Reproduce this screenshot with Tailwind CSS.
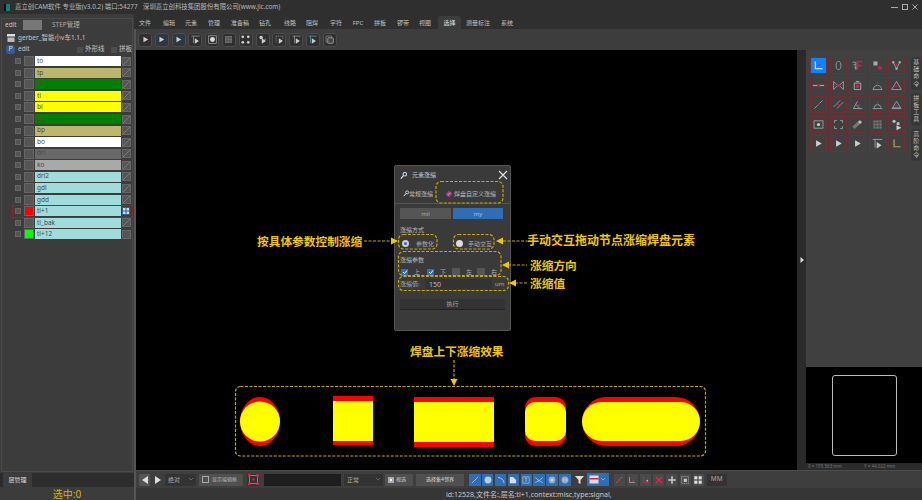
<!DOCTYPE html>
<html lang="zh">
<head>
    <meta charset="UTF-8">
    <title>嘉立创CAM软件</title>
    <script src="https://cdn.jsdelivr.net/npm/@tailwindcss/browser@4"></script>
</head>
<body class="w-[922px] h-[500px] overflow-hidden bg-[#2f2f2f] text-[#c4c4c4] font-['Noto_Sans','Noto_Sans_CJK_SC',sans-serif] text-[6px] leading-none">

    <!-- Title bar -->
    <div class="h-[14px] flex items-center bg-[#2f2f2f] text-[6.4px] text-[#b8b8b8] whitespace-nowrap">
        <div class="ml-[4px] w-[6px] h-[7px] bg-[#0f7f6f] border-l-[2px] border-[#111]"></div>
        <span class="ml-[5px] w-[128px]">嘉立创CAM软件 专业版(v3.0.2) 端口:54277</span>
        <span>深圳嘉立创科技集团股份有限公司(www.jlc.com)</span>
        <div class="ml-auto mr-[4px] flex items-center gap-[4px]">
            <div class="w-[7px] h-[1px] bg-[#aaa]"></div>
            <div class="w-[6px] h-[6px] border border-[#aaa]"></div>
            <svg class="w-[6px] h-[6px]" viewBox="0 0 6 6"><path d="M0.5 0.5L5.5 5.5M5.5 0.5L0.5 5.5" stroke="#aaa"/></svg>
        </div>
    </div>

    <div class="flex h-[486px]">
        <!-- Left panel -->
        <div class="w-[136px] shrink-0 flex flex-col bg-[#3c3c3c] border-r-[2px] border-[#555]">
            <div class="flex-1 mx-[1px] mt-[4px] flex flex-col border border-[#4a4a4a]">
                <div class="h-[12px] flex items-center text-[6.5px]">
                    <span class="ml-[3px] w-[18px]">edit</span>
                    <div class="w-[19px] h-[10px] bg-[#777]"></div>
                    <span class="ml-[10px] text-[#aaa]">STEP管理</span>
                </div>
                <div class="h-[14px] flex items-center">
                    <svg class="ml-[5px] w-[8px] h-[8px]" viewBox="0 0 8 8"><path d="M0 0H8V2.5H0Z" fill="#ddd"/><path d="M0.5 3.5H7.5V8H0.5Z" fill="#bbb"/></svg>
                    <span class="ml-[3px] text-[6.5px]">gerber_智能小v车1.1.1</span>
                </div>
                <div class="h-[9px] flex items-center text-[6.5px]">
                    <div class="ml-[4px] w-[9px] h-[9px] rounded-[3px] bg-[#2f5f96] text-[#dde] text-center text-[7px]">P</div>
                    <span class="ml-[3px] w-[59px]">edit</span>
                    <div class="w-[6px] h-[6px] bg-[#4d4d4d]"></div>
                    <span class="ml-[2px] w-[26px]">外形线</span>
                    <div class="w-[6px] h-[6px] bg-[#4d4d4d]"></div>
                    <span class="ml-[2px]">拼板</span>
                </div>
                <div id="layers" class="mt-[1.5px]"></div>
            </div>
            <div class="h-[14px] bg-[#2c2c2c] mt-[1px]">
                <div class="ml-[3px] w-[29px] h-[14px] bg-[#3c3c3c] flex items-center justify-center text-[#ddd]">层管理</div>
            </div>
            <div class="h-[13px] flex items-center justify-center text-[10px] text-[#d8b400]">选中:0</div>
        </div>

        <!-- Right side -->
        <div class="flex-1 flex flex-col min-w-0">
            <div id="tabs" class="h-[15px] -ml-[2px] flex items-end bg-[#2f2f2f] text-[#c0c0c0]"></div>
            <div id="tools" class="h-[21px] flex items-center pl-[2px] gap-[2.8px] bg-[#3d3d3d]"></div>

            <div class="h-[420px] flex">
                <!-- Canvas -->
                <div class="relative w-[661px] bg-black">
                    <!-- Dialog -->
                    <div class="absolute left-[258px] top-[115px] w-[117px] h-[166px] flex flex-col bg-[#3a3a3a] border border-[#555] rounded-[2px]">
                        <div class="h-[18px] flex items-center pl-[5px] text-[#ccc]">
                            <svg class="w-[7px] h-[7px]" viewBox="0 0 8 8"><circle cx="5.5" cy="2.5" r="2" fill="none" stroke="#bcd" stroke-width="1.3"/><path d="M4 4L1 7.5" stroke="#eef" stroke-width="1.3"/></svg>
                            <span class="ml-[5px]">元素涨缩</span>
                            <svg class="ml-auto mr-[2px] w-[10px] h-[10px]" viewBox="0 0 10 10"><path d="M1 1L9 9M9 1L1 9" stroke="#ddd" stroke-width="1.2"/></svg>
                        </div>
                        <div class="h-[19px] flex items-center pl-[8px] text-[#bbb]">
                            <svg class="w-[6px] h-[7px]" viewBox="0 0 8 8"><circle cx="5.5" cy="2.5" r="2" fill="none" stroke="#bcd" stroke-width="1.3"/><path d="M4 4L1 7.5" stroke="#eef" stroke-width="1.3"/></svg>
                            <span class="w-[34px]">常规涨缩</span>
                            <svg class="ml-[2px] w-[8px] h-[8px]" viewBox="0 0 8 8"><path d="M4 0.5L7.5 4L4 7.5L0.5 4Z" fill="#9a2fb0"/><path d="M2.5 5.5L5.5 2.5" stroke="#f07020" stroke-width="1.6"/></svg>
                            <span class="ml-[1px]">焊盘自定义涨缩</span>
                        </div>
                        <div class="flex-1 flex flex-col px-[5px] pt-[4px] border-t border-[#555]">
                            <div class="h-[11px] flex gap-[2px]">
                                <div class="w-[51px] bg-[#555] flex items-center justify-center text-[#aaa]">mil</div>
                                <div class="w-[50px] bg-[#2f6db5] flex items-center justify-center text-[#9fc4ea]">my</div>
                            </div>
                            <div class="h-[10px] mt-[6px] flex items-center text-[#bbb]">涨缩方式</div>
                            <div class="h-[15px] mt-[1px] flex items-center text-[#aaa]">
                                <div class="ml-[2px] w-[7px] h-[7px] rounded-full bg-[#2f6db5] border-[2px] border-[#ccd]"></div>
                                <span class="ml-[7px] w-[40px]">参数化</span>
                                <div class="w-[7px] h-[7px] rounded-full bg-[#ddd]"></div>
                                <span class="ml-[5px]">手动交互</span>
                            </div>
                            <div class="h-[10px] mt-[4px] flex items-center text-[#bbb]">涨缩参数</div>
                            <div class="h-[12px] mt-[1px] flex items-center text-[#aaa]">
                                <div class="ml-[1px] w-[7px] h-[7px] bg-[#2f6db5] flex items-center justify-center"><svg class="w-[6px] h-[6px]" viewBox="0 0 6 6"><path d="M1 3L2.5 4.5L5 1.5" fill="none" stroke="#fff" stroke-width="1"/></svg></div>
                                <span class="ml-[6px] w-[13px]">上</span>
                                <div class="w-[7px] h-[7px] bg-[#2f6db5] flex items-center justify-center"><svg class="w-[6px] h-[6px]" viewBox="0 0 6 6"><path d="M1 3L2.5 4.5L5 1.5" fill="none" stroke="#fff" stroke-width="1"/></svg></div>
                                <span class="ml-[6px] w-[12px]">下</span>
                                <div class="w-[8px] h-[8px] bg-[#555]"></div>
                                <span class="ml-[6px] w-[11px]">左</span>
                                <div class="w-[8px] h-[8px] bg-[#555]"></div>
                                <span class="ml-[6px]">右</span>
                            </div>
                            <div class="h-[12px] flex items-center text-[#aaa]">
                                <span class="w-[25px]">涨缩值:</span>
                                <div class="w-[67px] h-[10px] bg-[#333] flex items-center pl-[4px] text-[7px] text-[#bbb]">150</div>
                                <span class="ml-[3px]">um</span>
                            </div>
                            <div class="h-[11px] mt-[9px] w-[105px] bg-[#333] border-b border-[#222] flex items-center justify-center text-[#aaa]">执行</div>
                        </div>
                    </div>

                    <!-- Annotation lines and pad drawing -->
                    <svg class="absolute inset-0 w-[661px] h-[420px]" viewBox="136 50 661 420" fill="none">
                        <g stroke="#c8a800" stroke-width="1.2" stroke-dasharray="3 1.5">
                            <rect x="436" y="181.5" width="67" height="21.5" rx="5"/>
                            <rect x="398.5" y="234.5" width="38.5" height="14.5" rx="5"/>
                            <rect x="453.5" y="234.5" width="40.5" height="14.5" rx="5"/>
                            <rect x="398.5" y="251.5" width="102.5" height="24" rx="5"/>
                            <rect x="398.5" y="276.5" width="110" height="14" rx="5"/>
                            <rect x="235.5" y="386.5" width="470" height="69.5" rx="5"/>
                            <path d="M364 241H392"/>
                            <path d="M503 241H527"/>
                            <path d="M508 265H527"/>
                            <path d="M515 283H527"/>
                            <path d="M454 360V380"/>
                        </g>
                        <g fill="#f0c800">
                            <path d="M398 241L391 237.5V244.5Z"/>
                            <path d="M496 241L503 237.5V244.5Z"/>
                            <path d="M502 265L509 261.5V268.5Z"/>
                            <path d="M509 283L516 279.5V286.5Z"/>
                            <path d="M454 386L450.5 379H457.5Z"/>
                        </g>
                        <!-- pads: red is the original, yellow the shrunk result -->
                        <ellipse cx="260" cy="421.5" rx="20" ry="24.5" fill="#ff0000"/>
                        <circle cx="260" cy="421.5" r="20" fill="#ffff00"/>
                        <rect x="333" y="396" width="40" height="49" fill="#ff0000"/>
                        <rect x="333" y="401" width="40" height="40" fill="#ffff00"/>
                        <rect x="414" y="397" width="80" height="50" fill="#ff0000"/>
                        <rect x="414" y="402" width="80" height="40" fill="#ffff00"/>
                        <rect x="525" y="397" width="41" height="49" rx="11" fill="#ff0000"/>
                        <rect x="525" y="402" width="41" height="39" rx="10" fill="#ffff00"/>
                        <rect x="582" y="397" width="118" height="49" rx="24.5" fill="#ff0000"/>
                        <rect x="582" y="402" width="118" height="39" rx="19.5" fill="#ffff00"/>
                    </svg>

                    <span class="absolute left-[121px] top-[185px] text-[11.7px] leading-[12px] font-bold text-[#f0c800] whitespace-nowrap">按具体参数控制涨缩</span>
                    <span class="absolute left-[391px] top-[185px] text-[12px] leading-[12px] font-bold text-[#f0c800] whitespace-nowrap">手动交互拖动节点涨缩焊盘元素</span>
                    <span class="absolute left-[394px] top-[209px] text-[11.7px] leading-[12px] font-bold text-[#f0c800] whitespace-nowrap">涨缩方向</span>
                    <span class="absolute left-[394px] top-[227px] text-[11.7px] leading-[12px] font-bold text-[#f0c800] whitespace-nowrap">涨缩值</span>
                    <span class="absolute left-[274px] top-[295px] text-[11.7px] leading-[12px] font-bold text-[#f0c800] whitespace-nowrap">焊盘上下涨缩效果</span>
                </div>

                <!-- Splitter -->
                <div class="w-[9px] bg-[#2a2a2a] flex items-center justify-center">
                    <svg class="w-[4px] h-[6px]" viewBox="0 0 4 6"><path d="M0.5 0L4 3L0.5 6Z" fill="#ddd"/></svg>
                </div>

                <!-- Right tools -->
                <div class="w-[116px] flex flex-col bg-[#404040]">
                    <div class="flex-1 flex pl-[4px] pt-[7px]">
                        <div id="side" class="grid grid-cols-[repeat(5,17px)] auto-rows-[17px] gap-[2.6px]"></div>
                        <div class="ml-[6px] flex flex-col gap-[3px] w-[10px] text-[6px] leading-[7.2px] text-center text-[#c4c4c4]">
                            <div class="bg-[#363636] rounded-[3px] py-[2px]">基<br>础<br>命<br>令</div>
                            <div class="bg-[#363636] rounded-[3px] py-[2px]">拼<br>板<br>工<br>具</div>
                            <div class="bg-[#363636] rounded-[3px] py-[2px]">高<br>阶<br>命<br>令</div>
                        </div>
                    </div>
                    <div class="h-[96px] bg-black flex items-center justify-center">
                        <div class="w-[65px] h-[81px] border border-[#bbb] rounded-[3px]"></div>
                    </div>
                    <div class="h-[7px] bg-[#2b2b2b] flex items-center text-[4.5px] text-[#777] pl-[2px]">
                        <span class="w-[56px]">X = 155.563 mm</span>
                        <span>Y = 44.022 mm</span>
                    </div>
                </div>
            </div>

            <!-- Bottom toolbar -->
            <div class="h-[18px] flex items-center bg-[#3e3e3e] border-t border-[#4c4c4c]">
                <div class="ml-[3px] w-[11px] h-[12px] bg-[#555] flex items-center justify-center"><svg class="w-[6px] h-[8px]" viewBox="0 0 6 8"><path d="M6 0L0 4L6 8Z" fill="#ddd"/></svg></div>
                <div class="ml-[2px] w-[11px] h-[12px] flex items-center justify-center"><svg class="w-[6px] h-[8px]" viewBox="0 0 6 8"><path d="M0 0L6 4L0 8Z" fill="#ddd"/></svg></div>
                <div class="ml-[2px] w-[31px] h-[12px] bg-[#333] flex items-center justify-between px-[3px] text-[#aaa]"><span>绝对</span><svg class="w-[4px] h-[3px]" viewBox="0 0 4 3"><path d="M0 0L2 2L4 0" fill="none" stroke="#888" stroke-width="0.6"/></svg></div>
                <div class="ml-[3px] w-[44px] h-[12px] bg-[#505050] flex items-center pl-[3px] gap-[3px] text-[5px] text-[#bbb]"><div class="w-[7px] h-[7px] border border-[#aaa]"></div><span>显示编辑框</span></div>
                <div class="ml-[4px] w-[12px] h-[12px] bg-[#333] flex items-center justify-center"><svg class="w-[11px] h-[11px]" viewBox="0 0 11 11"><rect x="1.5" y="1.5" width="8" height="8" fill="none" stroke="#bbb" stroke-width="0.6"/><g fill="#e0204a"><rect x="0" y="0" width="2.5" height="2.5"/><rect x="8.5" y="0" width="2.5" height="2.5"/><rect x="0" y="8.5" width="2.5" height="2.5"/><rect x="8.5" y="8.5" width="2.5" height="2.5"/><rect x="4.5" y="4.5" width="2" height="2"/></g></svg></div>
                <div class="ml-[5px] w-[77px] h-[12px] bg-[#1e1e1e]"></div>
                <div class="ml-[3px] w-[39px] h-[12px] bg-[#333] flex items-center justify-between px-[3px] text-[#aaa]"><span>正常</span><svg class="w-[4px] h-[3px]" viewBox="0 0 4 3"><path d="M0 0L2 2L4 0" fill="none" stroke="#888" stroke-width="0.6"/></svg></div>
                <div class="ml-[2px] w-[28px] h-[12px] bg-[#505050] flex items-center pl-[3px] gap-[2px] text-[5px] text-[#ccc]"><div class="w-[6px] h-[6px] border-[2px] border-[#aaa] bg-[#eee]"></div><span>视选</span></div>
                <div class="ml-[3px] w-[48px] h-[12px] bg-[#505050] flex items-center justify-center text-[5px] text-[#ddd]">选择集4邻界</div>
                <div id="bottomBlue" class="ml-[5px] flex items-center gap-[1.4px]"></div>
                <svg class="ml-[3px] w-[11px] h-[11px]" viewBox="0 0 11 11"><path d="M1 2H10L6.5 6V10L4.5 9V6Z" fill="#ddd"/></svg>
                <div class="ml-[2px] w-[22px] h-[13px] bg-[#2f6db5] flex items-center pl-[2px] gap-[2px]">
                    <svg class="w-[10px] h-[9px]" viewBox="0 0 10 9"><rect x="0.5" y="0.5" width="9" height="8" fill="#ddd"/><rect x="0.5" y="3" width="9" height="1.5" fill="#e0204a"/></svg>
                    <svg class="w-[4px] h-[3px]" viewBox="0 0 4 3"><path d="M0 0L2 2L4 0" fill="none" stroke="#bcd" stroke-width="0.6"/></svg>
                </div>
                <div id="bottomTools" class="ml-[5px] flex items-center gap-[2.2px]"></div>
                <div class="ml-[3px] w-[20px] h-[12px] bg-[#333] flex items-center pl-[4px] text-[#aaa] text-[6.5px]">MM</div>
            </div>

            <!-- Status bar -->
            <div class="flex-1 flex items-center bg-[#363636] pl-[310px] text-[7px] text-[#c8c8c8] whitespace-nowrap">id:12528,文件名:,层名:tl+1,context:misc,type:signal,</div>
        </div>
    </div>

    <script>
        // Layer list
        const layers = [
            ['to', 'bg-white', ''], ['tp', 'bg-[#bdb76b]', ''], ['ts', 'bg-[#008000]', ''], ['tl', 'bg-[#ffff00]', ''],
            ['bl', 'bg-[#ffff00]', ''], ['bs', 'bg-[#008000]', ''], ['bp', 'bg-[#bdb76b]', ''], ['bo', 'bg-white', ''],
            ['drl', 'bg-[#696969]', ''], ['ko', 'bg-[#a9a9a9]', ''], ['drl2', 'bg-[#a0dcdc]', ''], ['gdl', 'bg-[#a0dcdc]', ''],
            ['gdd', 'bg-[#a0dcdc]', ''], ['tl+1', 'bg-[#a0dcdc]', 'bg-[#ff0000]'], ['tl_bak', 'bg-[#a0dcdc]', ''], ['tl+12', 'bg-[#a0dcdc]', 'bg-[#00ff00]']
        ];
        document.getElementById('layers').innerHTML = layers.map(([name, bg, swatch], i) => {
            const active = name === 'tl+1';
            const right = active
                ? '<svg class="w-[8px] h-[8px]" viewBox="0 0 8 8"><rect width="8" height="8" fill="#2f5f96"/><path d="M1 1H3.5V3.5H1ZM4.5 1H7V3.5H4.5ZM1 4.5H3.5V7H1ZM4.5 4.5H7V7H4.5Z" fill="#cde"/></svg>'
                : i === 15
                    ? '<div class="w-[9px] h-[9px] bg-[#555] border border-[#666]"></div>'
                    : '<svg class="w-[9px] h-[9px]" viewBox="0 0 9 9"><rect x="0.5" y="0.5" width="8" height="8" fill="#555" stroke="#666"/><path d="M1 8L8 1" stroke="#888" stroke-width="0.7"/></svg>';
            return `<div class="h-[11.55px] w-[119px] ml-[11px] flex items-center ${active ? 'outline outline-[0.7px] outline-[#8a2a2a] -outline-offset-[0.5px]' : ''}">
                <div class="w-[6px] h-[6px] ml-[2px] bg-[#555] border border-[#666]"></div>
                <div class="w-[10px] h-[10px] ml-[2.5px] border border-[#666] ${swatch || 'bg-[#555]'}"></div>
                <div class="w-[86px] h-[10px] ml-[1.5px] pl-[2px] flex items-center text-[6.5px] text-[#4a4a4a] ${bg}">${name}</div>
                <div class="ml-[1px]">${right}</div>
            </div>`;
        }).join('');

        // Menu tabs
        const tabs = [['文件', 22], ['编辑', 26], ['元素', 18], ['管理', 28], ['准备稿', 24], ['钻孔', 26], ['线路', 24], ['阻焊', 20], ['字符', 28], ['FPC', 16], ['拼板', 28], ['锣带', 18], ['视图', 26], ['选择', 23], ['测量标注', 34], ['系统', 24]];
        document.getElementById('tabs').innerHTML = tabs.map(([name, w]) => {
            const on = name === '选择';
            return `<div style="width:${w}px" class="h-[13px] shrink-0 flex items-center justify-center ${on ? 'bg-[#3d3d3d] rounded-t-[3px] text-[#e0e0e0]' : ''}">${name}</div>`;
        }).join('');

        // Icons, 16 x 16
        const arrow = '<path d="M5 4L12 8L5 12Z" fill="#ccc"/>';
        const small = '<path d="M7 6L13 10L7 14Z" fill="#ccc"/>';
        const topIcons = [
            arrow, arrow, arrow,
            '<path d="M2 3H14M5 3V13" stroke="#a0a0a0"/>' + small,
            '<rect x="2.5" y="2.5" width="11" height="11" stroke="#aaa" fill="none"/><circle cx="8" cy="8" r="3.5" fill="#ddd"/>',
            '<rect x="3" y="3" width="10" height="10" fill="#777"/><path d="M3 6H13M3 10H13M6 3V13M10 3V13" stroke="#444"/>',
            '<g fill="#ccc"><circle cx="4" cy="4" r="2"/><circle cx="12" cy="4" r="2"/><circle cx="4" cy="12" r="2"/><circle cx="12" cy="12" r="2"/></g>',
            '<circle cx="6" cy="5" r="2.5" fill="#ccc"/><circle cx="12" cy="8" r="1.5" fill="#c04060"/>' + small,
            '<path d="M3 3H13V7M3 3V13" stroke="#999" stroke-dasharray="2 1" fill="none"/>' + small,
            '<path d="M2 3H14M5 3V13" stroke="#a0a0a0"/>' + small,
            '<path d="M2 3H14M5 3V13" stroke="#6aa"/>' + small,
            '<rect x="3" y="3" width="8" height="9" rx="1" stroke="#999" fill="none"/><rect x="5.5" y="5.5" width="8" height="8" rx="1" stroke="#bbb" fill="#444"/>'
        ];
        document.getElementById('tools').innerHTML = topIcons.map((d, i) =>
            `<div class="w-[14px] h-[14px] shrink-0 flex items-center justify-center border border-[#4c4c4c] rounded-[3px] ${i === 1 || i === 2 ? 'bg-[#2c3846]' : 'bg-[#303030]'}"><svg class="w-[11px] h-[11px]" viewBox="0 0 16 16" fill="none">${d}</svg></div>`
        ).join('');

        // Right panel tools
        const r = '#d02048', g = '#a8a8a8';
        const sideIcons = [
            `<path d="M4 3V12H13" stroke="#fff" stroke-width="1.2"/><circle cx="9" cy="7" r="1.2" fill="${r}"/>`,
            `<ellipse cx="8" cy="8" rx="3" ry="5" stroke="${g}"/>`,
            `<path d="M2 4H6M3 7H6M4 10H6V13M6 4V13" stroke="${g}"/><path d="M8 3H14M8 3V13M8 8H13" stroke="${r}" stroke-width="2"/>`,
            `<rect x="3" y="3" width="5" height="5" fill="${g}"/><rect x="9" y="9" width="4" height="4" fill="${r}"/>`,
            `<path d="M4 4L8 12L12 4" stroke="${g}"/><circle cx="4" cy="4" r="1.5" fill="${g}"/><circle cx="12" cy="4" r="1.5" fill="${g}"/><circle cx="8" cy="12" r="1.5" fill="${g}"/><circle cx="8" cy="7" r="1.5" fill="${r}"/>`,
            `<path d="M1 8H15" stroke="${g}" stroke-width="1.5"/><circle cx="8" cy="8" r="1.7" fill="${r}"/>`,
            `<path d="M2 3L7 8L2 13ZM14 3L9 8L14 13Z" stroke="${g}"/><circle cx="8" cy="8" r="1.7" fill="${r}"/>`,
            `<path d="M4 5H12V13H4ZM6 3H10" stroke="${g}" stroke-width="1.2"/><path d="M6 7H10V11H6Z" fill="${r}"/>`,
            `<path d="M3 13A5 5 0 0 1 13 13M2 13H14" stroke="${g}"/><path d="M8 3V9" stroke="${r}"/>`,
            `<path d="M8 3L14 13H2Z" stroke="${g}"/><path d="M5 9H11" stroke="${r}"/>`,
            `<path d="M3 13L13 3" stroke="${g}"/><path d="M7 9L10 6" stroke="${r}" stroke-width="1.5"/>`,
            `<path d="M2 11L10 3M6 13L14 5" stroke="${g}"/><path d="M5 8L11 8" stroke="${r}"/>`,
            `<path d="M3 13H14M3 13L8 4M6 8L11 13" stroke="${g}"/><circle cx="10" cy="9" r="1.2" fill="${r}"/>`,
            `<path d="M4 12A4 4 0 0 1 12 12M2 13H14" stroke="${g}"/><path d="M8 4V10" stroke="${r}"/>`,
            `<path d="M8 4L13 12H3Z" stroke="${g}"/><path d="M2 13H14" stroke="${g}"/><path d="M6 9H10" stroke="${r}"/>`,
            `<rect x="2.5" y="3.5" width="11" height="9" stroke="${g}"/><circle cx="8" cy="8" r="2" fill="#ccc"/>`,
            `<g stroke="${g}"><path d="M3 3H6M3 3V6M13 3H10M13 3V6M3 13H6M3 13V10M13 13H10M13 13V10"/></g>`,
            `<path d="M3 12L12 4" stroke="#777" stroke-width="4"/><circle cx="11" cy="5" r="2" fill="#bbb"/>`,
            `<rect x="3" y="3" width="10" height="10" fill="#777"/><path d="M3 6H13M3 10H13M6 3V13M10 3V13" stroke="#444"/>`,
            `<circle cx="5" cy="4" r="2" fill="#bbb"/><circle cx="10" cy="7" r="2" fill="#bbb"/><path d="M8 9L14 12L8 15Z" fill="#ccc"/>`,
            arrow, arrow, arrow,
            `<path d="M2 3H14M5 3V13" stroke="${g}"/>` + small,
            `<path d="M5 3V12H13" stroke="#b8a060" stroke-width="1.5"/>`
        ];
        document.getElementById('side').innerHTML = sideIcons.map((d, i) =>
            `<div class="flex items-center justify-center rounded-[1px] border border-[#7a2a30] ${i === 0 ? 'bg-[#0a84ff]' : ''}"><svg class="w-[13px] h-[13px]" viewBox="0 0 16 16" fill="none">${d}</svg></div>`
        ).join('');

        // Bottom toolbar, blue toggles
        const blueIcons = [
            '<path d="M3 13L13 3" stroke="#dde"/>',
            '<circle cx="8" cy="8" r="5.5" fill="#bcd"/>',
            '<path d="M3 4A10 10 0 0 1 13 13" stroke="#dde" stroke-width="1.2"/>',
            '<path d="M3 13V3H8L13 8V13Z" fill="#dde"/>',
            '<rect x="3" y="3" width="10" height="10" stroke="#bcd"/><path d="M6 5H10M8 5V11" stroke="#dde"/>',
            '<path d="M2 4L8 9L14 4M2 12L8 9L14 12" stroke="#dde"/>',
            '<circle cx="8" cy="8" r="5.5" fill="#9ab"/><circle cx="8" cy="8" r="2" fill="#dde"/>',
            '<circle cx="8" cy="8" r="5.5" fill="#9ab"/><path d="M4 8H12" stroke="#dde"/>'
        ];
        document.getElementById('bottomBlue').innerHTML = blueIcons.map(d =>
            `<div class="w-[11.5px] h-[12px] bg-[#2f6db5] flex items-center justify-center"><svg class="w-[10px] h-[10px]" viewBox="0 0 16 16" fill="none">${d}</svg></div>`
        ).join('');

        const bottomIcons = [
            '<path d="M3 13L13 3" stroke="#888"/><circle cx="8" cy="8" r="1.5" fill="#e0204a"/>',
            '<path d="M4 3V12H13" stroke="#bbb"/><circle cx="10" cy="9" r="1.5" fill="#e0204a"/>',
            '<path d="M4 3V12H13" stroke="#e0204a"/><circle cx="10" cy="9" r="1.5" fill="#bbb"/>',
            '<path d="M3 3L13 13M13 3L3 13" stroke="#e0204a" stroke-width="2.4"/>',
            '<path d="M8 2V14M2 8H14" stroke="#ccc" stroke-width="2.4"/>',
            '<rect x="2.5" y="2.5" width="11" height="11" stroke="#bbb" stroke-dasharray="2 1"/><rect x="6" y="6" width="5" height="5" fill="#ccc"/>',
            '<rect x="2" y="2" width="5" height="5" fill="#ddd"/><rect x="9" y="2" width="5" height="5" fill="#ddd"/><rect x="2" y="9" width="5" height="5" fill="#ddd"/><rect x="9" y="9" width="5" height="5" fill="#ddd"/>'
        ];
        document.getElementById('bottomTools').innerHTML = bottomIcons.map(d =>
            `<div class="w-[11px] h-[12px] bg-[#4a4a4a] flex items-center justify-center"><svg class="w-[10px] h-[10px]" viewBox="0 0 16 16" fill="none">${d}</svg></div>`
        ).join('');
    </script>
</body>
</html>
